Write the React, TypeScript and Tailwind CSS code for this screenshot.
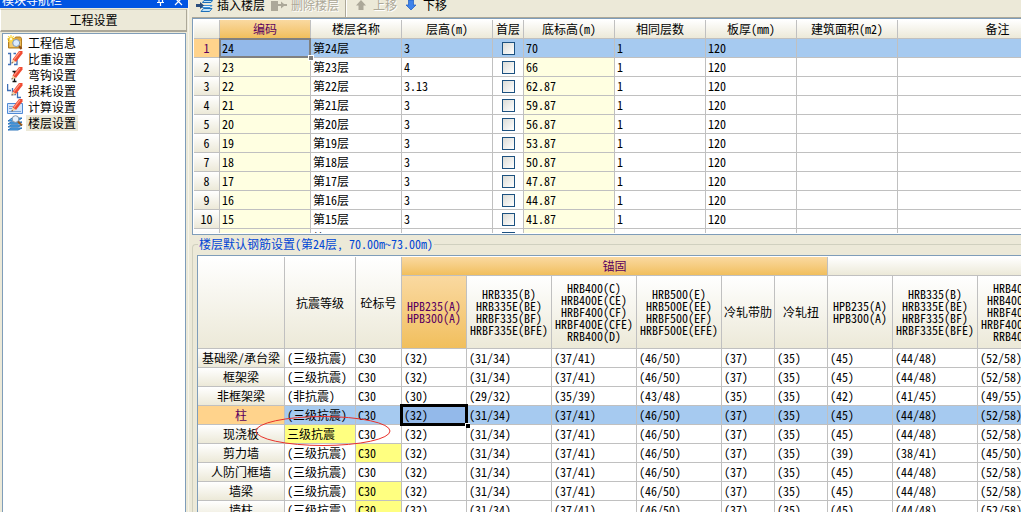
import React from "react";

const FONT = "font-['Noto_Sans_Mono_CJK_SC','Noto_Sans_CJK_SC',sans-serif]";

const GRAY_HEAD = "bg-linear-to-b from-white to-[#ece9d8] text-black";
const GOLD_HEAD = "bg-linear-to-b from-[#fad9a0] to-[#f1bf5c] text-[#5a0060]";
const LINE = "border-r border-b border-[#c0c0c0]";

function Pencil() {
  return (
    <g>
      <path d="M5.500 8.500 12 0h3.500v2.500L9 11z" fill="#f04a32" />
      <path d="M7 8.500 13 .8" stroke="#ff9a86" strokeWidth="1.200" />
      <path d="M5.500 8.500 4.500 12.500l4.500-1.500z" fill="#f3cfa0" />
      <path d="M4.500 12.500l.4-1.500 1.200.9z" fill="#222" />
    </g>
  );
}

function NavIcon({ kind }: { kind: string }) {
  return (
    <svg viewBox="0 0 16 16" className="h-4 w-4 shrink-0">
      {kind === "info" && (
        <g>
          <path d="M1.500 3.500h6l1-1.500h5l1 1.500V13h-13z" fill="#e0a93f" stroke="#b07c20" />
          <path d="M2.500 6h11v6h-11z" fill="#f4cb70" />
          <path d="M4 0v8M0 4h8M1.200 1.200l5.600 5.600M6.800 1.200 1.200 6.800" stroke="#ffd83a" strokeWidth="1.200" />
          <circle cx="4" cy="4" r="1.300" fill="#fffbd0" />
          <circle cx="9.200" cy="8" r="3.500" fill="#dcecff" stroke="#7e98b4" />
          <path d="M12 11l2.500 3" stroke="#8a4a14" strokeWidth="2" />
        </g>
      )}
      {kind === "weight" && (
        <g>
          <path d="M1 2.500h2.500v11H1M6.500 2.500H9M7 13.500h3V8" fill="none" stroke="#3f6fb5" strokeWidth="1.300" />
          <Pencil />
        </g>
      )}
      {kind === "hook" && (
        <g>
          <path d="M5.500 4.500h4M7.500 5v10M5.500 14.500h4" fill="none" stroke="#111" strokeWidth="1.300" />
          <Pencil />
        </g>
      )}
      {kind === "loss" && (
        <g>
          <path d="M.6 1v6.500H4M5.500 5v6.500H9M10.500 9v5.500H14" fill="none" stroke="#3f6fb5" strokeWidth="1.300" />
          <Pencil />
        </g>
      )}
      {kind === "calc" && (
        <g>
          <path d="M.5 4.500h15v10H.5z" fill="#d3e5fb" stroke="#4f8ad6" />
          <path d="M2 12.500h12M2 7.500h4M2 9.500h3" stroke="#7aa3d8" />
          <Pencil />
        </g>
      )}
      {kind === "floor" && (
        <g>
          <path d="M1 6 5 3h10l-4 3zM1 9l3-2h11l-4 2zM1 12l3-2h11l-4 2zM1 15l3-2h11l-4 2z" fill="#5fb0ee" stroke="#1c69b4" strokeWidth=".9" />
          <circle cx="8.500" cy="4" r="3.300" fill="#e6f2ff" stroke="#8b98a8" />
          <path d="M11 6.500 15 10.500" stroke="#9a5a1c" strokeWidth="2" />
        </g>
      )}
    </svg>
  );
}

const NAV: [string, string][] = [
  ["info", "工程信息"],
  ["weight", "比重设置"],
  ["hook", "弯钩设置"],
  ["loss", "损耗设置"],
  ["calc", "计算设置"],
  ["floor", "楼层设置"],
];

function Sidebar() {
  return (
    <aside className="flex w-[188px] shrink-0 flex-col bg-[#ece9d8]">
      <div className="flex h-2 shrink-0 items-end overflow-hidden bg-[#0054e3] text-white">
        <div className="flex h-4 flex-1 items-center pl-0.5">
          <span className="flex-1">模块导航栏</span>
          <svg viewBox="0 0 32 16" className="h-4 w-8">
            <path d="M1 10.500h7M3 10V2M6.500 10V2M4.500 10v4" stroke="#fff" fill="none" strokeWidth="1.200" />
            <path d="m19 6 7 7M26 6l-7 7" stroke="#fff" strokeWidth="1.200" />
          </svg>
        </div>
      </div>
      <button className="mt-px h-[23px] w-[187px] shrink-0 border border-b-2 border-[#aca899] border-t-[#c9c6b5] border-l-white bg-[#ece9d8] text-center leading-5">
        工程设置
      </button>
      <ul className="mx-0.5 mt-px flex-1 border border-b-0 border-[#7f9db9] bg-white pt-px pl-1">
        {NAV.map(([kind, label]) => (
          <li key={kind}>
            <button className="flex h-4 items-center gap-[3px]">
              <NavIcon kind={kind} />
              <span className={kind === "floor" ? "h-4 bg-[#ece9d8] px-0.5 leading-4" : "h-4 px-0.5 leading-4"}>{label}</span>
            </button>
          </li>
        ))}
      </ul>
    </aside>
  );
}

function Toolbar() {
  const off = "text-[#aca899] [text-shadow:1px_1px_0_#fff]";
  return (
    <div className="flex h-[17px] shrink-0 items-end overflow-hidden bg-[#ece9d8] pl-1">
      <div className="flex h-6 items-center whitespace-nowrap">
        <button className="flex items-center gap-1">
          <svg viewBox="0 0 17 16" className="h-4 w-[17px]">
            <path d="M6.500 5.500 8 3.500h8.500L15 5.500zM5 14.500l2.500-3H16l-2.500 3z" fill="#bfe3fb" stroke="#1d6fb8" />
            <path d="M4.500 10.500 7 8.500h9l-2 2z" fill="#eef8ff" stroke="#3b8fd6" />
            <path d="M0 7h4V5l4 3.500L4 12v-2H0z" fill="#2a4d7c" />
          </svg>
          插入楼层
        </button>
        <button disabled className={"ml-1.5 flex items-center gap-1 " + off}>
          <svg viewBox="0 0 16 16" className="h-4 w-4">
            <path d="M0 4h7v3h3V4.500l3 2.500h3v2h-3l-3 2.500V9H7v5H0z" fill="#aca899" />
          </svg>
          删除楼层
        </button>
        <span className="ml-1.5 h-6 w-0.5 border-l border-[#aca899] bg-white" />
        <button disabled className={"ml-2 flex items-center gap-1 " + off}>
          <svg viewBox="0 0 12 16" className="mr-0.5 h-4 w-3">
            <path d="M6 3 11 8.500H8.500V13h-5V8.500H1z" fill="#aca899" />
          </svg>
          上移
        </button>
        <button className="ml-2 flex items-center gap-1">
          <svg viewBox="0 0 12 16" className="mr-0.5 h-4 w-3">
            <path d="M6 13 11 8H8.500V3h-5v5H1z" fill="#3f83ea" stroke="#1e5bc0" strokeWidth=".7" />
          </svg>
          下移
        </button>
      </div>
    </div>
  );
}

const FLOORS: [number, string, string][] = [
  [24, "3", "70"],
  [23, "4", "66"],
  [22, "3.13", "62.87"],
  [21, "3", "59.87"],
  [20, "3", "56.87"],
  [19, "3", "53.87"],
  [18, "3", "50.87"],
  [17, "3", "47.87"],
  [16, "3", "44.87"],
  [15, "3", "41.87"],
  [14, "3", "38.87"],
];

function FloorTable() {
  const heads = ["编码", "楼层名称", "层高(m)", "首层", "底标高(m)", "相同层数", "板厚(mm)", "建筑面积(m2)", "备注"];
  const cell = LINE + " h-[19px] px-0.5 py-0 leading-4";
  return (
    <div className="h-[217px] shrink-0 overflow-hidden border border-r-0 border-[#7f9db9] bg-white pt-px pl-px">
      <div className="h-[213px] overflow-hidden">
        <table className="w-full min-w-[904px] table-fixed border-separate border-spacing-0 whitespace-nowrap">
          <colgroup>
            <col className="w-[26px]" />
            <col className="w-[91px]" />
            <col className="w-[91px]" />
            <col className="w-[91px]" />
            <col className="w-[31px]" />
            <col className="w-[91px]" />
            <col className="w-[91px]" />
            <col className="w-[91px]" />
            <col className="w-[101px]" />
            <col className="w-[200px]" />
          </colgroup>
          <thead>
            <tr>
              <td className={`${LINE} ${GRAY_HEAD} h-[19px] p-0`} />
              {heads.map((h, i) => (
                <th key={h} id={`head-${i}`} className={`${LINE} ${i === 0 ? GOLD_HEAD : GRAY_HEAD} h-[19px] p-0 text-center leading-4 font-normal`}>
                  {h}
                </th>
              ))}
            </tr>
          </thead>
          <tbody>
            {FLOORS.map(([code, height, level], i) => {
              const sel = i === 0;
              const pale = sel ? "" : "bg-[#ffffe1]";
              return (
                <tr key={code} className={sel ? "bg-[#a6caf0]" : "bg-white"}>
                  <th className={`${LINE} h-[19px] p-0 text-center leading-4 font-normal ${sel ? "bg-[#ffd38c] text-[#5a0060]" : GRAY_HEAD}`}>
                    {i + 1}
                  </th>
                  <td className={`${cell} ${sel ? "relative bg-[#93b9ea]" : pale}`}>
                    {code}
                    {sel && (
                      <>
                        <span className="absolute -inset-x-px -top-px -bottom-px border-2 border-[#808080]" />
                        <span className="absolute -right-1 -bottom-1 z-10 h-1.5 w-1.5 border border-white bg-[#808080]" />
                      </>
                    )}
                  </td>
                  <td id={`floor-${code}`} className={cell}>{`第${code}层`}</td>
                  <td className={cell}>{height}</td>
                  <td className={cell}>
                    <input
                      type="checkbox"
                      aria-labelledby={`floor-${code} head-3`}
                      className="mx-auto block h-[13px] w-[13px] appearance-none border border-[#1c5180] bg-linear-to-br from-[#dcdcd7] to-white"
                    />
                  </td>
                  <td className={`${cell} ${pale}`}>{level}</td>
                  <td className={cell}>1</td>
                  <td className={cell}>120</td>
                  <td className={cell} />
                  <td className={cell} />
                </tr>
              );
            })}
          </tbody>
        </table>
      </div>
    </div>
  );
}

const H235 = ["HPB235(A)", "HPB300(A)"];
const H335 = ["HRB335(B)", "HRB335E(BE)", "HRBF335(BF)", "HRBF335E(BFE)"];
const H400 = ["HRB400(C)", "HRB400E(CE)", "HRBF400(CF)", "HRBF400E(CFE)", "RRB400(D)"];
const H500 = ["HRB500(E)", "HRB500E(EE)", "HRBF500(EF)", "HRBF500E(EFE)"];
const STEELS = [H235, H335, H400, H500, ["冷轧带肋"], ["冷轧扭"], H235, H335, H400];

const COMMON = ["(32)", "(31/34)", "(37/41)", "(46/50)", "(37)", "(35)", "(45)", "(44/48)", "(52/58)"];

type Part = { name: string; grade?: string; gradeSet?: boolean; mixSet?: boolean; values?: string[] };
const PARTS: Part[] = [
  { name: "基础梁/承台梁" },
  { name: "框架梁" },
  { name: "非框架梁", grade: "(非抗震)", values: ["(30)", "(29/32)", "(35/39)", "(43/48)", "(35)", "(35)", "(42)", "(41/45)", "(49/55)"] },
  { name: "柱" },
  { name: "现浇板", grade: "三级抗震", gradeSet: true },
  { name: "剪力墙", mixSet: true, values: ["(32)", "(31/34)", "(37/41)", "(46/50)", "(37)", "(35)", "(39)", "(38/41)", "(45/50)"] },
  { name: "人防门框墙" },
  { name: "墙梁", mixSet: true },
  { name: "墙柱", mixSet: true },
];

function RebarTable() {
  const cell = LINE + " h-[19px] px-0.5 py-0 leading-4";
  return (
    <div className="ml-1 min-h-0 flex-1 overflow-hidden border border-r-0 border-b-0 border-[#7f9db9] bg-white pt-px">
      <table className="w-full min-w-[865px] table-fixed border-separate border-spacing-0 whitespace-nowrap">
        <colgroup>
          <col className="w-[87px]" />
          <col className="w-[71px]" />
          <col className="w-[46px]" />
          <col className="w-[65px]" />
          <col className="w-[85px]" />
          <col className="w-[85px]" />
          <col className="w-[85px]" />
          <col className="w-[53px]" />
          <col className="w-[53px]" />
          <col className="w-[65px]" />
          <col className="w-[85px]" />
          <col className="w-[85px]" />
        </colgroup>
        <thead>
          <tr>
            <td rowSpan={2} className={`${LINE} ${GRAY_HEAD} p-0`} />
            <th rowSpan={2} className={`${LINE} ${GRAY_HEAD} p-0 font-normal`}>抗震等级</th>
            <th rowSpan={2} className={`${LINE} ${GRAY_HEAD} p-0 font-normal`}>砼标号</th>
            <th colSpan={6} className={`${LINE} ${GOLD_HEAD} h-[19px] p-0 leading-4 font-normal`}>锚固</th>
            <td colSpan={3} className={`${LINE} ${GRAY_HEAD} h-[19px] p-0`} />
          </tr>
          <tr>
            {STEELS.map((lines, i) => (
              <th key={i} className={`${LINE} ${i === 0 ? GOLD_HEAD : GRAY_HEAD} h-[73px] p-0 text-center leading-3 font-normal`}>
                {lines.map((l) => (
                  <div key={l}>{l}</div>
                ))}
              </th>
            ))}
          </tr>
        </thead>
        <tbody>
          {PARTS.map((p) => {
            const sel = p.name === "柱";
            return (
              <tr key={p.name} className={sel ? "bg-[#a6caf0]" : "bg-white"}>
                <th className={`${LINE} h-[19px] p-0 text-center leading-4 font-normal ${sel ? "bg-[#ffd38c] text-[#5a0060]" : GRAY_HEAD}`}>
                  {p.name}
                </th>
                <td className={`${cell} ${p.gradeSet ? "relative bg-[#ffff80]" : ""}`}>
                  {p.grade ?? "(三级抗震)"}
                  {p.gradeSet && (
                    <svg viewBox="0 0 136 32" className="absolute -top-2.5 -left-[30px] z-10 h-8 w-[136px]">
                      <ellipse cx="68" cy="16" rx="67" ry="14.500" fill="none" stroke="#e8302a" />
                    </svg>
                  )}
                </td>
                <td className={`${cell} ${p.mixSet ? "bg-[#ffff80]" : ""}`}>C30</td>
                {(p.values ?? COMMON).map((v, i) => (
                  <td key={i} className={`${cell} ${sel && i === 0 ? "relative bg-[#93b9ea]" : ""}`}>
                    {v}
                    {sel && i === 0 && (
                      <>
                        <span className="absolute -inset-x-0.5 -inset-y-0.5 border-3 border-black" />
                        <span className="absolute -right-1 -bottom-1 z-10 h-[5px] w-[5px] border-t border-l border-white bg-black" />
                      </>
                    )}
                  </td>
                ))}
              </tr>
            );
          })}
        </tbody>
      </table>
    </div>
  );
}

export default function App() {
  return (
    <div className={`flex h-screen w-full overflow-hidden bg-[#ece9d8] text-xs text-black ${FONT}`}>
      <Sidebar />
      <main className="flex min-w-0 flex-1 flex-col border-l border-[#f6f4ea] pl-[3px]">
        <Toolbar />
        <div className="h-px shrink-0 bg-[#aca899]" />
        <FloorTable />
        <section className="flex min-h-0 flex-1 flex-col">
          <div className="flex h-5 shrink-0">
            <span className="mt-[9px] w-1.5 rounded-tl-sm border-t border-l border-[#d0d0bf]" />
            <h2 className="px-px leading-[18px] whitespace-nowrap text-[#0046d5]">楼层默认钢筋设置(第24层, 70.00m~73.00m)</h2>
            <span className="mt-[9px] h-px flex-1 bg-[#d0d0bf]" />
          </div>
          <div className="flex min-h-0 flex-1 flex-col border-l border-[#d0d0bf]">
            <RebarTable />
          </div>
        </section>
      </main>
    </div>
  );
}
